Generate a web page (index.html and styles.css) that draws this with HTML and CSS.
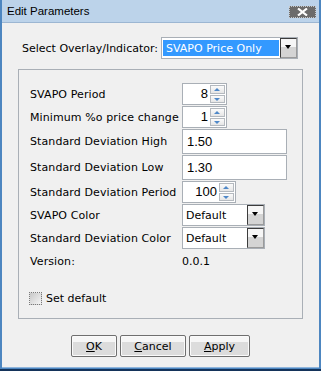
FILE: index.html
```html
<!DOCTYPE html>
<html lang="en">
<head>
  <meta charset="UTF-8" />
  <title>Edit Parameters</title>
  <link rel="stylesheet" href="styles.css">
</head>
<body>
  <div class="window">
    <div class="titlebar">
      <span class="title">Edit Parameters</span>
      <span class="close">
        <svg width="13" height="8" viewBox="0 0 13 8">
          <path d="M2 0.5 L11 7.5 M11 0.5 L2 7.5" stroke="#fff" stroke-width="2.2" />
        </svg>
      </span>
    </div>

    <div class="client">
      <div class="overlay-row">
        <span class="overlay-label">Select Overlay/Indicator:</span>
        <div class="combo combo-main">
          <span class="combo-value"><span class="selected">SVAPO Price Only</span></span>
          <span class="combo-arrow"></span>
        </div>
      </div>

      <div class="group">
        <div class="form">
          <span class="lbl">SVAPO Period</span>
          <div class="spinner">
            <span class="spin-value">8</span>
            <span class="spin-btns"><span class="spin up"></span><span class="spin down"></span></span>
          </div>

          <span class="lbl">Minimum %o price change</span>
          <div class="spinner">
            <span class="spin-value">1</span>
            <span class="spin-btns"><span class="spin up"></span><span class="spin down"></span></span>
          </div>

          <span class="lbl">Standard Deviation High</span>
          <div class="textfield">1.50</div>

          <span class="lbl">Standard Deviation Low</span>
          <div class="textfield">1.30</div>

          <span class="lbl">Standard Deviation Period</span>
          <div class="spinner spinner-wide">
            <span class="spin-value">100</span>
            <span class="spin-btns"><span class="spin up"></span><span class="spin down"></span></span>
          </div>

          <span class="lbl">SVAPO Color</span>
          <div class="combo combo-small">
            <span class="combo-value">Default</span>
            <span class="combo-arrow"></span>
          </div>

          <span class="lbl">Standard Deviation Color</span>
          <div class="combo combo-small">
            <span class="combo-value">Default</span>
            <span class="combo-arrow"></span>
          </div>

          <span class="lbl version">Version:</span>
          <span class="version-value">0.0.1</span>
        </div>

        <label class="check">
          <span class="checkbox"></span>
          Set default
        </label>
      </div>

      <div class="buttons">
        <button class="btn btn-ok"><u>O</u>K</button>
        <button class="btn btn-cancel"><u>C</u>ancel</button>
        <button class="btn btn-apply"><u>A</u>pply</button>
      </div>
    </div>
  </div>
</body>
</html>
```

FILE: styles.css
```css
* {
  margin: 0;
  padding: 0;
  box-sizing: border-box;
}
body {
  width: 321px;
  height: 371px;
  overflow: hidden;
  background: #f0f0f0;
  font-family: 'DejaVu Sans', sans-serif;
  font-size: 11px;
  color: #000;
}
.window {
  width: 321px;
  height: 371px;
  display: flex;
  flex-direction: column;
  border-left: 2px solid #4d86c0;
  border-right: 2px solid #4d86c0;
  border-bottom: 3px solid #4d86c0;
  box-shadow: inset 0 -1px 0 #8fb5dc;
  background: #f0f0f0;
  position: relative;
}
.window::after {
  content: "";
  position: absolute;
  left: -2px;
  right: -2px;
  bottom: -3px;
  height: 2px;
  background: #14335a;
}

/* title bar */
.titlebar {
  height: 23px;
  display: flex;
  align-items: center;
  justify-content: space-between;
  padding: 0 3px 1px 5px;
  background-color: #bcd3ea;
  background-image: radial-gradient(#a9c4e2 0.6px, transparent 0.7px);
  background-size: 2px 2px;
  border-bottom: 1px solid #9cb6d2;
}
.title {
  font-family: 'Liberation Sans', sans-serif;
  font-size: 11.5px;
  color: #000;
}
.close {
  width: 27px;
  height: 12px;
  display: flex;
  align-items: center;
  justify-content: center;
  background: #6b6b6b;
  border: 1px dotted #c8c8c8;
  margin-top: 2px;
}

/* client area */
.client {
  flex: 1;
  display: flex;
  flex-direction: column;
  padding: 14px 0 0 16px;
}
.overlay-row {
  display: flex;
  align-items: center;
  padding-left: 4px;
  gap: 3px;
}

/* combo boxes */
.combo {
  display: flex;
  height: 22px;
  background: #fff;
  border: 1px solid #a9afb6;
}
.combo-main {
  width: 137px;
}
.combo-small {
  width: 83px;
}
.combo-value {
  flex: 1;
  display: flex;
  align-items: center;
  padding: 2px 1px 1px 3px;
}
.combo-main .combo-value {
  padding: 2px 1px 2px 1px;
}
.selected {
  display: flex;
  align-items: center;
  width: 100%;
  height: 100%;
  background: #3399ff;
  color: #fff;
  padding-left: 3px;
}
.combo-arrow {
  width: 17px;
  position: relative;
  border-top: 1px solid #3c3c3c;
  border-left: 1px solid #3c3c3c;
  border-right: 1px solid #9a9a9a;
  border-bottom: 1px solid #9a9a9a;
  background: linear-gradient(#f6f6f6 0 45%, #d4d4d4 45% 100%);
}
.combo-arrow::after {
  content: "";
  position: absolute;
  left: 4px;
  top: 6px;
  border-left: 3.5px solid transparent;
  border-right: 3.5px solid transparent;
  border-top: 4px solid #000;
}

/* group box */
.group {
  margin-top: 10px;
  width: 285px;
  height: 250px;
  border: 1px solid #a9afb6;
  padding: 13px 0 0 11px;
}
.form {
  display: grid;
  grid-template-columns: 152px auto;
  grid-template-rows: 22px 22px 25px 25px 22px 22px 22px 22px;
  row-gap: 1px;
  align-items: center;
  justify-items: start;
}
.lbl {
  letter-spacing: 0.1px;
}

/* spinner */
.spinner {
  display: flex;
  width: 45px;
  height: 22px;
  background: #fff;
  border: 1px solid #a9afb6;
}
.spinner-wide {
  width: 54px;
}
.spin-value {
  flex: 1;
  text-align: right;
  font-family: 'Liberation Sans', sans-serif;
  font-size: 13px;
  line-height: 20px;
  padding-right: 2px;
}
.spin-btns {
  display: flex;
  flex-direction: column;
  gap: 1px;
  padding: 1px 1px 1px 0;
  width: 16px;
}
.spin {
  flex: 1;
  position: relative;
  border: 1px solid #b4b9bf;
  background: linear-gradient(#fbfbfb, #e6e6e6);
}
.spin::after {
  content: "";
  position: absolute;
  left: 3px;
  top: 2px;
  border-left: 3px solid transparent;
  border-right: 3px solid transparent;
}
.spin.up::after {
  border-bottom: 3px solid #4f88c8;
}
.spin.down::after {
  border-top: 3px solid #4f88c8;
}

/* text fields */
.textfield {
  width: 105px;
  height: 25px;
  background: #fff;
  border: 1px solid #a9afb6;
  padding-left: 4px;
  font-family: 'Liberation Sans', sans-serif;
  font-size: 13px;
  line-height: 23px;
}
.version-value {
  padding-left: 0;
}

/* checkbox */
.check {
  display: flex;
  align-items: center;
  gap: 4px;
  margin: 18px 0 0 -1px;
  height: 16px;
}
.checkbox {
  width: 13px;
  height: 13px;
  border: 1px dotted #7a7a7a;
  background: linear-gradient(135deg, #c8c8c8, #f4f4f4);
}

/* buttons */
.buttons {
  display: flex;
  justify-content: center;
  gap: 3px;
  margin: 16px 0 0 -16px;
}
.btn {
  height: 22px;
  font-family: 'DejaVu Sans', sans-serif;
  font-size: 11px;
  color: #000;
  border: 1px solid #6f6f6f;
  border-radius: 2px;
  background: linear-gradient(#f6f6f6 0 30%, #dcdcdc 30% 100%);
  box-shadow: inset 0 0 0 1px #fafafa;
}
.btn-ok {
  width: 46px;
}
.btn-cancel {
  width: 66px;
}
.btn-apply {
  width: 61px;
}
```
